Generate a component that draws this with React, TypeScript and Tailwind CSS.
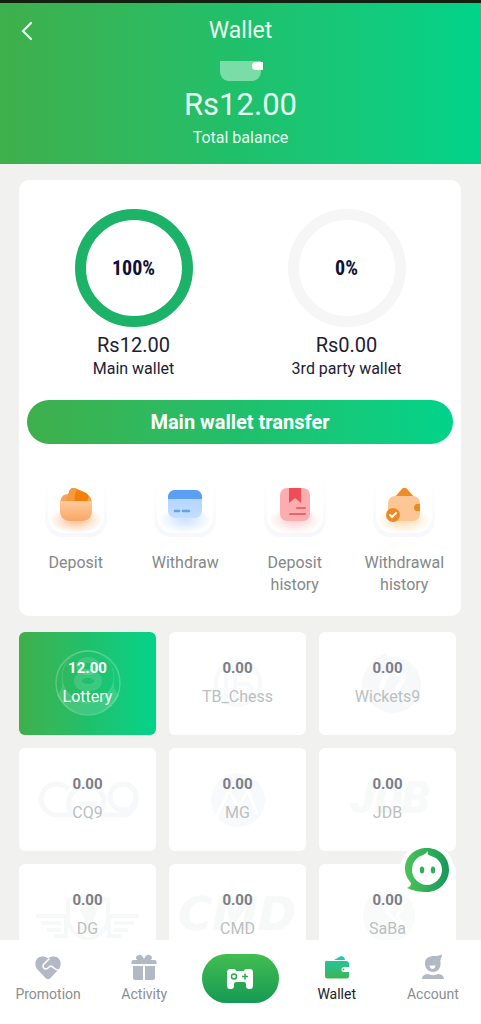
import { useState, type ReactNode } from 'react'

type Provider = {
  name: string
  balance: string
  mark: ReactNode
}

type WalletShareProps = {
  percent: number
  amount: string
  label: string
}

const brandGradient = 'bg-linear-to-r from-[#3eaf4b] via-[#1fc06b] to-[#00d38a]'

const providers: Provider[] = [
  {
    name: 'Lottery',
    balance: '12.00',
    mark: (
      <>
        <circle cx="69" cy="51" r="32" fill="none" stroke="#fff" strokeOpacity=".22" strokeWidth="1.5" />
        <path
          d="M38 63c5-5 6-11 4-18 2 14 12 24 27 24s25-10 27-24c-2 7-1 13 4 18-5 11-17 19-31 19S43 74 38 63z"
          fill="#fff"
          fillOpacity=".14"
        />
        <circle cx="69" cy="45" r="26" fill="none" stroke="#fff" strokeOpacity=".12" />
        <ellipse cx="69" cy="34" rx="9" ry="6" fill="none" stroke="#fff" strokeOpacity=".13" strokeWidth="6" />
        <ellipse cx="69" cy="49" rx="10" ry="7" fill="none" stroke="#fff" strokeOpacity=".13" strokeWidth="8" />
      </>
    ),
  },
  {
    name: 'TB_Chess',
    balance: '0.00',
    mark: (
      <g fill="none" stroke="#f8f9fa" strokeWidth="4">
        <circle cx="69" cy="51" r="22" />
        <path d="M57 38v28M66 38v28M66 42h8M66 52h10a7 7 0 0 1 0 14H66" />
      </g>
    ),
  },
  {
    name: 'Wickets9',
    balance: '0.00',
    mark: (
      <>
        <circle cx="74" cy="53" r="28" fill="#f7f8f9" />
        <path d="M44 52c2-14 11-25 24-29M44 61c0-3 0-6 2-9" stroke="#f7f8f9" strokeWidth="3" fill="none" />
        <path d="M68 42l-7 16M76 42c8-4 10 3 6 9l-8 14" stroke="#fefffe" strokeWidth="5" fill="none" />
      </>
    ),
  },
  {
    name: 'CQ9',
    balance: '0.00',
    mark: (
      <g fill="none" stroke="#f7f8f9" strokeWidth="5">
        <path d="M50 41c-3-3-7-5-12-5-9 0-16 7-16 15s7 16 16 16h16c-4-4-5-9-4-14 1-8 8-15 18-15s17 7 17 15c0 6-2 9-5 12" />
        <path d="M60 56h18M82 67h22c8 0 13-8 13-18" />
        <circle cx="104" cy="49" r="13" />
      </g>
    ),
  },
  {
    name: 'MG',
    balance: '0.00',
    mark: (
      <>
        <circle cx="69" cy="52" r="27" fill="#f8f9fb" />
        <path d="M47 70l13-28 9 18 10-18 9 24" stroke="#fefffe" strokeWidth="3" fill="none" />
      </>
    ),
  },
  {
    name: 'JDB',
    balance: '0.00',
    mark: (
      <text
        x="71"
        y="65"
        textAnchor="middle"
        fontSize="44"
        fontWeight="900"
        fontStyle="italic"
        fill="#f8f9f9"
      >
        JDB
      </text>
    ),
  },
  {
    name: 'DG',
    balance: '0.00',
    mark: (
      <g fill="none" stroke="#f7f8f8" strokeWidth="4">
        <path d="M17 52h30v20H35M22 59h20M28 66h14M120 52H90v20h12M115 59H95M109 66H95" />
        <path d="M49 36c8 0 13-3 20-6 7 3 12 6 20 6v18c0 12-9 18-20 22-11-4-20-10-20-22z" />
        <path d="M60 46l10-8 8 8-4 12 6 8H58l8-10z" fill="#f7f8f8" stroke="none" />
      </g>
    ),
  },
  {
    name: 'CMD',
    balance: '0.00',
    mark: (
      <text
        x="68"
        y="66"
        textAnchor="middle"
        fontSize="46"
        fontWeight="900"
        fontStyle="italic"
        fontFamily="DejaVu Sans"
        fill="#f7f8f8"
      >
        CMD
      </text>
    ),
  },
  {
    name: 'SaBa',
    balance: '0.00',
    mark: (
      <>
        <circle cx="70" cy="52" r="26" fill="#f9fafa" />
        <path d="M58 38h18l-8 10 12 12-12 10M86 38l-8 14 10 14" stroke="#fefffe" strokeWidth="3" fill="none" />
      </>
    ),
  },
]

function Tile({ id, glow, children }: { id: string; glow: string; children: ReactNode }) {
  return (
    <svg viewBox="0 0 64 64" className="size-16" aria-hidden="true">
      <defs>
        <linearGradient id={`${id}-side`} x1="0" y1="0" x2="0" y2="1">
          <stop offset="0" stopColor="#f9f9fc" stopOpacity="0" />
          <stop offset="1" stopColor="#f7f7fc" />
        </linearGradient>
        <radialGradient id={`${id}-glow`}>
          <stop offset="0" stopColor={glow} stopOpacity=".85" />
          <stop offset="1" stopColor={glow} stopOpacity="0" />
        </radialGradient>
      </defs>
      <path d="M1 6h62v40c0 10-8 17-18 17H19C9 63 1 56 1 46z" fill={`url(#${id}-side)`} />
      <path d="M4 4h56v38c0 9-6 17-15 17H19C10 59 4 51 4 42z" fill="#fefffe" />
      <ellipse cx="32" cy="46" rx="26" ry="13" fill={`url(#${id}-glow)`} />
      {children}
    </svg>
  )
}

function DepositIcon() {
  return (
    <Tile id="deposit" glow="#ffb27a">
      <defs>
        <linearGradient id="deposit-front" x1="0" y1="0" x2="0" y2="1">
          <stop offset="0" stopColor="#ffcb9c" />
          <stop offset="1" stopColor="#f9a766" />
        </linearGradient>
      </defs>
      <path d="M16 30c0-6 3-10 8-10h16c5 0 8 4 8 10v4H16z" fill="#f7a25c" />
      <path d="M25 18c1-4 4-5 8-3l7 3c5 2 6 5 3 9H23z" fill="#f57f0a" />
      <path d="M25 18c1-4 4-5 8-3-2 4-3 8-2 12h-9z" fill="#f79a3e" />
      <path d="M16 27h32v10c0 6-4 10-10 10H26c-6 0-10-4-10-10z" fill="url(#deposit-front)" />
    </Tile>
  )
}

function WithdrawIcon() {
  return (
    <Tile id="withdraw" glow="#c5dcff">
      <defs>
        <linearGradient id="withdraw-front" x1="0" y1="0" x2="0" y2="1">
          <stop offset="0" stopColor="#b0d1ff" />
          <stop offset="1" stopColor="#c4defe" />
        </linearGradient>
      </defs>
      <rect x="15" y="16" width="34" height="28" rx="7" fill="url(#withdraw-front)" />
      <path d="M15 25v-2c0-4 3-7 7-7h20c4 0 7 3 7 7v2z" fill="#5b9ff5" />
      <path d="M22 37h4M30 37h6" stroke="#669fea" strokeWidth="2.5" strokeLinecap="round" />
    </Tile>
  )
}

function DepositHistoryIcon() {
  return (
    <Tile id="deposit-history" glow="#ffc5c5">
      <rect x="17" y="14" width="30" height="33" rx="7" fill="#fbadb0" />
      <path d="M26 14h12v15l-6-5-6 5z" fill="#ee4d56" />
      <path d="M34 34h8M27 40h15" stroke="#e9656d" strokeWidth="2" strokeLinecap="round" />
    </Tile>
  )
}

function WithdrawalHistoryIcon() {
  return (
    <Tile id="withdrawal-history" glow="#ffd3a3">
      <path d="M22 24l7-8c2-3 5-3 7 0l7 8z" fill="#f18b23" />
      <rect x="16" y="22" width="32" height="25" rx="7" fill="#fcc795" />
      <path d="M48 30h-4a4 4 0 0 0 0 7h4z" fill="#ef8a1f" />
      <circle cx="21" cy="41" r="7" fill="#ec8a26" />
      <path d="M18 41l2 2 4-4" stroke="#fff" strokeWidth="2" fill="none" strokeLinecap="round" />
    </Tile>
  )
}

const actions = [
  { label: 'Deposit', Icon: DepositIcon },
  { label: 'Withdraw', Icon: WithdrawIcon },
  { label: 'Deposit history', Icon: DepositHistoryIcon },
  { label: 'Withdrawal history', Icon: WithdrawalHistoryIcon },
]

function WalletShare({ percent, amount, label }: WalletShareProps) {
  const length = 2 * Math.PI * 53.5
  return (
    <div className="flex flex-col items-center text-[#1d2035]">
      <div className="relative size-[118px]">
        <svg viewBox="0 0 118 118" className="size-full -rotate-90" aria-hidden="true">
          <circle cx="59" cy="59" r="53.5" fill="none" stroke="#f6f6f6" strokeWidth="11" />
          {percent > 0 && (
            <circle
              cx="59"
              cy="59"
              r="53.5"
              fill="none"
              stroke="#1cb268"
              strokeWidth="11"
              strokeDasharray={`${(length * percent) / 100} ${length}`}
            />
          )}
        </svg>
        <span className="absolute inset-0 flex items-center justify-center font-['Liberation_Sans_Narrow','Roboto_Condensed',Roboto,sans-serif] text-xl font-bold text-[#0d1137]">
          {percent}%
        </span>
      </div>
      <p className="mt-1.5 text-xl leading-6">{amount}</p>
      <p className="text-base leading-6">{label}</p>
    </div>
  )
}

function PromotionIcon() {
  return (
    <svg viewBox="0 0 26 26" className="size-[26px]" aria-hidden="true">
      <path
        d="M11 24.5L2.500 15.500C-2 10 1 2.500 7 2.500c2.500 0 4.500.5 6 2 1.500-1.500 3.500-2 6-2 6 0 9 7.500 4.500 13L15 24.500c-1 1-3 1-4 0z"
        fill="#b3b8c5"
      />
      <path
        d="M14 5L8.500 10.500c-1.500 3 1.500 6 4.500 3.500l2.500-2c3 0 3.500 4 7.500 4"
        fill="none"
        stroke="#fff"
        strokeWidth="1.5"
        strokeLinecap="round"
      />
    </svg>
  )
}

function ActivityIcon() {
  return (
    <svg viewBox="0 0 26 26" className="size-[26px]" fill="#b3b8c5" aria-hidden="true">
      <path d="M13 5C11 1 9 0 6.500 1.500S5 5 6.500 6H2a1.500 1.500 0 0 0-1.500 1.500V10h25V7.500A1.500 1.500 0 0 0 24 6h-4.500c1.500-1 2.500-3 0-4.500S15 1 13 5z" />
      <path d="M2 12h10v14H4a2 2 0 0 1-2-2zM14 12h10v12a2 2 0 0 1-2 2h-8z" />
    </svg>
  )
}

function WalletIcon() {
  return (
    <svg viewBox="0 0 26 26" className="size-[26px]" aria-hidden="true">
      <defs>
        <linearGradient id="nav-wallet" x1="0" y1="0" x2="0" y2="1">
          <stop offset="0" stopColor="#25c59b" />
          <stop offset="1" stopColor="#3db554" />
        </linearGradient>
      </defs>
      <path d="M10 6l7-4 3 1 1 3z" fill="#25c9b0" />
      <path
        d="M4 7h18a3 3 0 0 1 3 3v3h-5a2.500 2.500 0 0 0 0 5h5v4a2.500 2.500 0 0 1-2.500 2.500h-19A2.500 2.500 0 0 1 1 22V9a2 2 0 0 1 3-2z"
        fill="url(#nav-wallet)"
      />
      <circle cx="19.500" cy="15.500" r="1" fill="#3dbf6d" />
    </svg>
  )
}

function AccountIcon() {
  return (
    <svg viewBox="0 0 26 26" className="size-[26px]" fill="#b3b8c5" aria-hidden="true">
      <path d="M22 .5c0 3-2 4-1.500 8C21 15 17 18 13 18S5 15 5 9.500C5 4 9 2 14 2c3 0 5 0 8-1.500z" />
      <path d="M9.500 11.500h6c-.5 4.500-5.500 4.500-6 0z" fill="#fff" />
      <path d="M2 25c0-4 4-5 6-5 3 1.500 7 1.500 10 0 2 0 6 1 6 5z" />
    </svg>
  )
}

const navLeft = [
  { label: 'Promotion', Icon: PromotionIcon },
  { label: 'Activity', Icon: ActivityIcon },
]

const navRight = [
  { label: 'Wallet', Icon: WalletIcon },
  { label: 'Account', Icon: AccountIcon },
]

function NavLink({ label, Icon }: { label: string; Icon: () => ReactNode }) {
  const active = label === 'Wallet'
  return (
    <a
      href={`#${label.toLowerCase()}`}
      aria-current={active ? 'page' : undefined}
      className={`flex flex-col items-center text-sm ${
        active ? 'text-[#1e2028]' : 'text-[#8b8e93]'
      }`}
    >
      <Icon />
      <span className="mt-1">{label}</span>
    </a>
  )
}

export default function App() {
  const [selected, setSelected] = useState('Lottery')

  return (
    <div className="relative flex h-screen flex-col bg-[#f1f1f0] font-[Roboto,sans-serif]">
      <div className="min-h-0 flex-1 overflow-y-auto pb-4 [scrollbar-width:none]">
        <header
          className={`flex flex-col items-center border-t-[3px] border-[#14200f] pb-3.5 text-[#e6fbef] ${brandGradient}`}
        >
          <div className="grid h-14 w-full grid-cols-[1fr_auto_1fr] items-center px-5">
            <button type="button" aria-label="Back" className="w-fit">
              <svg viewBox="0 0 14 20" className="h-5 w-3.5" fill="none" aria-hidden="true">
                <path d="M11 2L3 10l8 8" stroke="#e6fbef" strokeWidth="2.2" strokeLinecap="round" />
              </svg>
            </button>
            <h1 className="text-[23px]">Wallet</h1>
          </div>
          <svg viewBox="0 0 44 20" className="mt-0.5 h-5 w-11" aria-hidden="true">
            <path d="M1 0h41v10c0 6-4 10-9 10H10c-5 0-9-4-9-10z" fill="#7adca6" />
            <path d="M37 1h7v8h-7a4 4 0 0 1 0-8z" fill="#fff" />
          </svg>
          <p className="mt-1.5 text-[31px] leading-9">Rs12.00</p>
          <p className="mt-[3px] text-base leading-6">Total balance</p>
        </header>

        <section className="mr-5 ml-[19px] mt-4 rounded-[10px] bg-[#fefffe] px-0.5 pt-[29px] pb-5">
          <div className="grid grid-cols-2 px-1.5">
            <WalletShare percent={100} amount="Rs12.00" label="Main wallet" />
            <WalletShare percent={0} amount="Rs0.00" label="3rd party wallet" />
          </div>
          <div className="mt-[19px] px-1.5">
            <button
              type="button"
              className={`h-11 w-full rounded-full text-xl font-bold text-white ${brandGradient}`}
            >
              Main wallet transfer
            </button>
          </div>
          <div className="mt-[30px] grid grid-cols-4">
            {actions.map(({ label, Icon }) => (
              <button
                key={label}
                type="button"
                className="flex flex-col items-center text-base leading-[22px] text-[#85888b]"
              >
                <Icon />
                <span className="mt-3.5 px-2">{label}</span>
              </button>
            ))}
          </div>
        </section>

        <section className="mt-4 mr-[25px] ml-[19px] grid grid-cols-3 gap-[13px]">
          {providers.map((provider) => {
            const active = provider.name === selected
            return (
              <button
                key={provider.name}
                type="button"
                aria-pressed={active}
                onClick={() => setSelected(provider.name)}
                className={`relative flex h-[103px] flex-col items-center justify-start rounded-md pt-[26px] ${
                  active ? `text-white ${brandGradient}` : 'bg-[#fefffe]'
                }`}
              >
                <svg
                  viewBox="0 0 137 103"
                  className="absolute inset-0 size-full"
                  aria-hidden="true"
                >
                  {provider.mark}
                </svg>
                <span
                  className={`relative text-[15px] leading-5 font-bold ${active ? '' : 'text-[#7b7e88]'}`}
                >
                  {provider.balance}
                </span>
                <span
                  className={`relative mt-[7px] text-base leading-6 ${active ? '' : 'text-[#bcbfc2]'}`}
                >
                  {provider.name}
                </span>
              </button>
            )
          })}
        </section>
      </div>

      <button
        type="button"
        aria-label="Customer service"
        className="absolute right-[27px] bottom-[127px] rounded-full"
      >
        <svg viewBox="0 0 54 54" className="size-[54px]" aria-hidden="true">
          <defs>
            <linearGradient id="service" x1="0" y1="0" x2="1" y2="0">
              <stop offset="0" stopColor="#4cc458" />
              <stop offset="1" stopColor="#16985a" />
            </linearGradient>
          </defs>
          <circle cx="27" cy="27" r="27" fill="#fefffe" />
          <path
            d="M27 5c12 0 22 9 22 21.500S39 49 27 49c-8 0-13-1-20-4 3-1 4-3 4-5-3-4-6-8-6-14C5 13 15 5 27 5z"
            fill="url(#service)"
          />
          <path
            d="M28 8c-1 3 0 4 3 5 7 2 11 7 11 14 0 8-7 15-15 15s-15-7-15-15c0-8 5-13 11-15 2-1 3-2 5-4z"
            fill="#fff"
          />
          <ellipse cx="22" cy="27" rx="2.200" ry="3.500" fill="#2fae5c" />
          <ellipse cx="33" cy="27" rx="2.200" ry="3.500" fill="#2fae5c" />
        </svg>
      </button>

      <nav className="grid h-[84px] grid-cols-5 items-start bg-[#fefffe] pt-3.5">
        {navLeft.map((item) => (
          <NavLink key={item.label} {...item} />
        ))}
        <a
          href="#games"
          aria-label="Games"
          className="flex h-[49px] w-[77px] items-center justify-center justify-self-center rounded-full bg-linear-to-b from-[#42bd4f] to-[#129a55]"
        >
          <svg viewBox="0 0 30 24" className="h-6 w-[30px]" aria-hidden="true">
            <path
              d="M5 2h4c1 0 2 1 2 2h8c0-1 1-2 2-2h4c2 0 3 1 3 4v12c0 3-1 4-3 4h-1c-2 0-3-1-3-3v-2c0-1-1-2-2-2h-8c-1 0-2 1-2 2v2c0 2-1 3-3 3H5c-2 0-3-1-3-4V6c0-3 1-4 3-4z"
              fill="#fff"
            />
            <circle cx="9" cy="9.500" r="2.500" fill="none" stroke="#2aab52" strokeWidth="1.5" />
            <path d="M20 6.500v6M17 9.500h6" stroke="#2aab52" strokeWidth="1.5" />
          </svg>
        </a>
        {navRight.map((item) => (
          <NavLink key={item.label} {...item} />
        ))}
      </nav>
    </div>
  )
}
